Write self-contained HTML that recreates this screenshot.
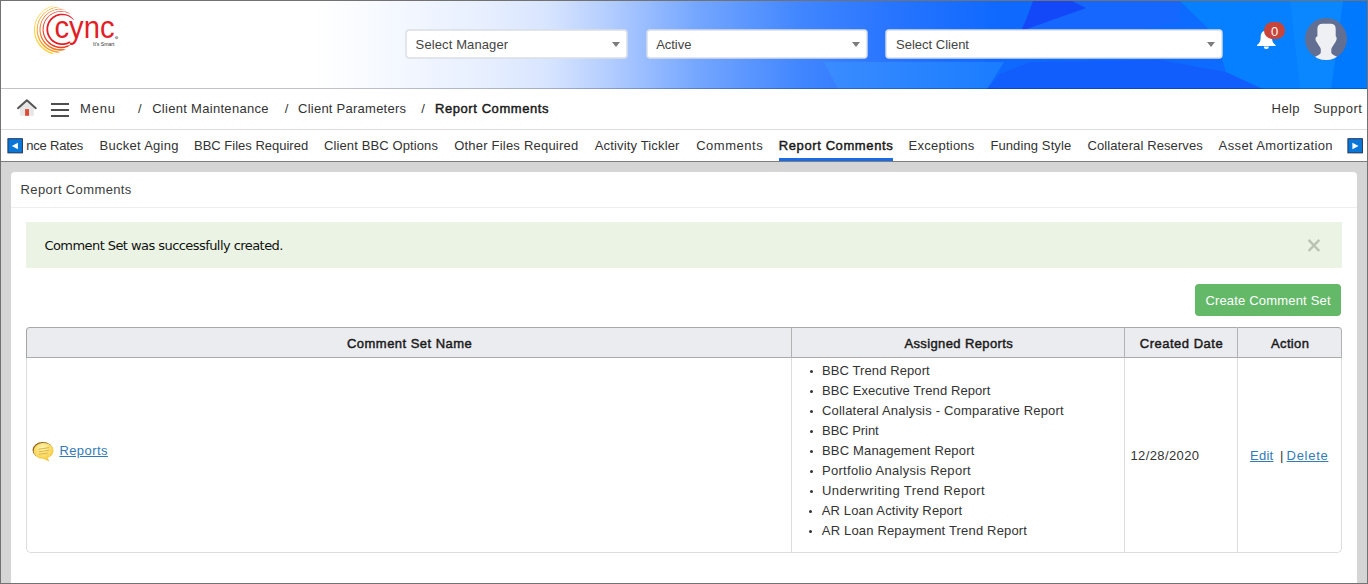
<!DOCTYPE html>
<html lang="en">
<head>
<meta charset="utf-8">
<title>Report Comments - Cync</title>
<style>
*{box-sizing:border-box;margin:0;padding:0}
html,body{width:1368px;height:584px;overflow:hidden;background:#fff}
body{font-family:"Liberation Sans",sans-serif;font-size:13px;color:#333;position:relative}
.frame{position:absolute;left:0;top:0;width:1368px;height:584px;border:1px solid #727272;z-index:50;pointer-events:none}
.abs{position:absolute;white-space:nowrap}
/* header */
header{position:absolute;left:1px;top:1px;width:1366px;height:88px;overflow:hidden;background:#fff}
header:after{content:"";position:absolute;left:0;top:87px;width:100%;height:1px;background:rgba(0,0,30,.24)}
header svg.bg{position:absolute;left:0;top:0}
.sel{position:absolute;top:29px;height:28px;background:#fff;border:1px solid #e1e5ec;border-radius:3px;box-shadow:0 0 0 0.700px #d9dee8;font-size:13px;color:#444;line-height:26px;padding-left:8px}
.sel i{position:absolute;right:6.200px;top:11px;width:0;height:0;border-left:4px solid transparent;border-right:4px solid transparent;border-top:5px solid #7c7c7c}
.uline{position:absolute;left:778px;top:28px;width:114px;height:3px;background:#1a6be6}
.badge{position:absolute;left:1263px;top:21px;width:21px;height:17px;border-radius:8.5px;background:#c9453a}
.burger{position:absolute;left:50px;top:14px;width:18px}
.burger i{display:block;height:2px;background:#4d4d4d;margin-bottom:4px}
.arr{position:absolute;top:7.700px}
/* breadcrumb */
.crumbs{position:absolute;left:1px;top:89px;width:1366px;height:41px;border-bottom:1px solid #dcdcdc;background:#fff}
.tabs{position:absolute;left:1px;top:130px;width:1366px;height:32px;border-bottom:1px solid #7d7d7d;background:#fff}
.t{position:absolute;white-space:nowrap;font-size:13px;color:#333;line-height:16px}
.b{font-weight:normal;color:#1a1a1a;-webkit-text-stroke:0.450px #1a1a1a}
.main{position:absolute;left:1px;top:162px;width:1366px;height:421px;background:#d5d5d5}
.panel{position:absolute;left:10px;top:10px;width:1346px;height:420px;background:#fff;border-radius:4px 4px 0 0}
.phead{position:absolute;left:0;top:0;width:100%;height:36px;border-bottom:1px solid #eeeeee}
.alert{position:absolute;left:15px;top:50px;width:1316px;height:46px;background:#ebf4e4;font-family:"DejaVu Sans","Liberation Sans",sans-serif;font-size:13px;color:#080808}
.btn{position:absolute;left:1184px;top:112px;width:146px;height:32px;background:#64b969;border-radius:4px;color:#fff;font-size:13px}
table{position:absolute;left:15px;top:155px;width:1316px;border-collapse:separate;border-spacing:0;font-size:13px}
th{height:31px;background:#ebecf0;border-top:1px solid #a9a9a9;border-bottom:1px solid #ababab;border-left:1px solid #b2b2b2;font-weight:normal;color:#222;text-align:center;position:relative}
td{height:195px;border-left:1px solid #dcdcdc;border-bottom:1px solid #dcdcdc;vertical-align:middle;position:relative}
th:last-child,td:last-child{border-right:1px solid #dcdcdc}
th:first-child{border-top-left-radius:4px;border-left-color:#a4a4a4}
th:last-child{border-top-right-radius:4px;border-right-color:#b2b2b2}
td:first-child{border-bottom-left-radius:5px}
td:last-child{border-bottom-right-radius:5px}
a,a.t{color:#337ab7;text-decoration:underline}
ul{list-style:none}
li:before{content:"";position:absolute;left:-12.500px;top:6.500px;width:3px;height:3px;border-radius:50%;background:#333}
</style>
</head>
<body>
<header>
<svg class="bg" width="1366" height="88" viewBox="1 1 1366 88">
<defs><linearGradient id="g" gradientUnits="userSpaceOnUse" x1="0" x2="1368" y1="0" y2="0">
<stop offset="0.23" stop-color="#ffffff"/><stop offset="0.29" stop-color="#f4f8ff"/><stop offset="0.355" stop-color="#e7efff"/><stop offset="0.40" stop-color="#d8e5ff"/><stop offset="0.445" stop-color="#b3cdff"/><stop offset="0.51" stop-color="#74a6ff"/><stop offset="0.585" stop-color="#4186ff"/><stop offset="0.65" stop-color="#2875ff"/><stop offset="0.73" stop-color="#0f69ff"/><stop offset="1" stop-color="#0b6cff"/></linearGradient><linearGradient id="g2" gradientUnits="userSpaceOnUse" x1="824" x2="1004" y1="0" y2="0"><stop offset="0" stop-color="#3b8cff"/><stop offset="1" stop-color="#197cff"/></linearGradient></defs>
<rect x="1" y="1" width="1366" height="88" fill="url(#g)"/>
<polygon points="824,62 1004,62 987,89 838,89" fill="url(#g2)"/>
<polygon points="1033,1 1180,1 1180,22 1120,32 1020,33" fill="#1667fd"/>
<polygon points="1033,1 1072,1 1086,8 1021,31 1026,20" fill="#1248f7"/>
<polygon points="987,89 1000,74 1030,62 1160,60 1226,72 1263,89" fill="#125efc"/>
<polygon points="1180,1 1367,1 1367,89 1263,89 1226,72 1214,34" fill="#0780ff"/>
<polygon points="1343,1 1367,1 1367,89 1331,89" fill="#0079ff"/><polygon points="1290,1 1343,1 1331,89 1300,89" fill="#0a86ff"/>
</svg>
<svg class="logo" width="130" height="60" viewBox="0 0 130 60" style="position:absolute;left:-1px;top:-1px">
<g><path d="M74.10 20.33L73.35 19.06L72.43 17.89L71.29 16.93L70.07 16.07L68.77 15.33L67.40 14.71L65.98 14.23L64.50 13.88L63.00 13.68L61.48 13.63L59.96 13.73L58.45 13.99L56.98 14.40L55.55 14.97L54.20 15.68L52.91 16.52L51.72 17.48L50.62 18.55L49.63 19.72L48.76 20.99L48.02 22.33L47.41 23.73L46.94 25.19L46.62 26.69L46.44 28.22L46.41 29.75L46.52 31.28L46.79 32.79L47.20 34.26L47.75 35.69L48.44 37.07L49.26 38.36L50.20 39.57L51.25 40.69L52.40 41.70L53.65 42.59L54.98 43.35L56.38 43.99L57.83 44.48L59.32 44.84L60.84 45.04L62.37 45.10L63.90 45.01L65.42 44.77L66.90 44.38L68.34 43.86L69.72 43.19L70.53 41.65L70.53 41.65L68.87 41.61L67.64 42.20L66.37 42.67L65.05 43.01L63.71 43.22L62.35 43.30L61.00 43.25L59.65 43.07L58.33 42.75L57.04 42.31L55.80 41.75L54.63 41.07L53.52 40.28L52.50 39.39L51.56 38.40L50.73 37.33L50.01 36.18L49.40 34.97L48.91 33.70L48.55 32.39L48.31 31.05L48.21 29.70L48.23 28.34L48.39 26.99L48.68 25.66L49.10 24.37L49.64 23.12L50.30 21.93L51.07 20.81L51.94 19.77L52.91 18.82L53.97 17.97L55.11 17.23L56.31 16.60L57.57 16.08L58.86 15.67L60.20 15.37L61.55 15.20L62.93 15.16L64.30 15.25L65.66 15.47L67.01 15.82L68.31 16.30L69.57 16.92L70.75 17.66L71.86 18.52L73.00 19.38L74.10 20.33z" fill="#e31e26"/><path d="M70.72 14.09L69.40 13.18L68.00 12.38L66.48 11.84L64.91 11.44L63.32 11.18L61.71 11.06L60.10 11.08L58.49 11.24L56.90 11.54L55.35 11.98L53.84 12.55L52.38 13.25L50.99 14.08L49.68 15.02L48.45 16.07L47.32 17.23L46.29 18.48L45.37 19.82L44.57 21.24L43.90 22.72L43.36 24.26L42.96 25.84L42.70 27.45L42.58 29.08L42.60 30.71L42.77 32.34L43.08 33.95L43.53 35.53L44.11 37.06L44.84 38.54L45.69 39.95L46.66 41.27L47.75 42.51L48.94 43.65L50.23 44.68L51.61 45.60L53.06 46.38L54.58 47.04L56.16 47.56L57.77 47.93L59.41 48.16L61.07 48.25L62.72 48.18L64.37 47.97L65.99 47.62L67.57 47.12L69.00 46.27L70.17 45.03L70.17 45.03L68.53 45.26L67.03 45.62L65.58 46.07L64.10 46.40L62.59 46.59L61.07 46.65L59.56 46.58L58.05 46.38L56.57 46.05L55.12 45.59L53.72 45.01L52.37 44.31L51.08 43.49L49.88 42.56L48.75 41.53L47.72 40.41L46.79 39.19L45.97 37.90L45.26 36.54L44.67 35.13L44.22 33.66L43.89 32.16L43.69 30.63L43.63 29.09L43.70 27.55L43.91 26.02L44.26 24.52L44.73 23.04L45.34 21.62L46.07 20.25L46.92 18.95L47.88 17.73L48.95 16.59L50.11 15.56L51.36 14.63L52.69 13.82L54.09 13.13L55.55 12.57L57.04 12.13L58.58 11.84L60.13 11.68L61.69 11.66L63.25 11.77L64.79 12.03L66.30 12.41L67.78 12.93L69.26 13.45L70.72 14.09z" fill="#e8432a"/><path d="M65.31 9.74L63.81 9.30L62.29 8.93L60.72 8.83L59.15 8.87L57.59 9.02L56.04 9.29L54.52 9.68L53.03 10.18L51.58 10.79L50.18 11.51L48.84 12.33L47.57 13.25L46.36 14.26L45.24 15.36L44.20 16.54L43.25 17.80L42.40 19.13L41.65 20.51L41.00 21.96L40.47 23.44L40.04 24.97L39.74 26.52L39.55 28.10L39.49 29.68L39.54 31.27L39.71 32.85L40.01 34.41L40.42 35.95L40.95 37.46L41.59 38.92L42.34 40.33L43.20 41.68L44.16 42.96L45.22 44.16L46.37 45.28L47.60 46.31L48.90 47.24L50.28 48.07L51.71 48.79L53.20 49.40L54.73 49.90L56.30 50.27L57.88 50.52L59.49 50.65L61.10 50.66L62.70 50.54L64.23 49.96L65.65 49.18L65.65 49.18L64.06 49.07L62.52 48.95L61.04 49.06L59.55 49.05L58.07 48.93L56.60 48.70L55.16 48.37L53.74 47.92L52.35 47.37L51.02 46.72L49.73 45.97L48.50 45.12L47.34 44.18L46.25 43.16L45.24 42.06L44.32 40.88L43.49 39.64L42.75 38.34L42.11 36.98L41.58 35.58L41.15 34.14L40.83 32.67L40.63 31.18L40.54 29.67L40.56 28.16L40.70 26.66L40.95 25.17L41.32 23.70L41.79 22.26L42.38 20.87L43.07 19.52L43.87 18.22L44.76 16.99L45.75 15.83L46.82 14.75L47.97 13.76L49.20 12.85L50.49 12.05L51.84 11.34L53.24 10.74L54.69 10.25L56.16 9.88L57.67 9.61L59.18 9.47L60.71 9.43L62.23 9.50L63.77 9.54L65.31 9.74z" fill="#f07a2b"/><path d="M59.68 7.13L58.19 7.08L56.68 7.07L55.19 7.28L53.72 7.62L52.28 8.07L50.87 8.60L49.51 9.23L48.18 9.95L46.90 10.75L45.68 11.63L44.52 12.59L43.42 13.62L42.39 14.73L41.44 15.90L40.56 17.12L39.76 18.41L39.05 19.74L38.43 21.12L37.90 22.54L37.46 23.99L37.12 25.47L36.88 26.97L36.73 28.48L36.69 30.00L36.74 31.52L36.90 33.04L37.16 34.54L37.51 36.03L37.97 37.48L38.52 38.91L39.17 40.30L39.90 41.64L40.73 42.93L41.64 44.17L42.63 45.34L43.70 46.44L44.84 47.47L46.05 48.42L47.32 49.29L48.64 50.07L50.02 50.76L51.44 51.36L52.89 51.86L54.38 52.26L55.89 52.56L57.42 52.75L58.97 52.43L60.46 52.06L60.46 52.06L58.99 51.69L57.57 51.17L56.15 50.98L54.74 50.70L53.36 50.33L52.00 49.87L50.68 49.32L49.39 48.68L48.15 47.97L46.95 47.17L45.81 46.30L44.73 45.36L43.71 44.34L42.76 43.26L41.88 42.12L41.07 40.93L40.35 39.68L39.71 38.39L39.15 37.06L38.68 35.69L38.31 34.29L38.02 32.87L37.83 31.43L37.74 29.98L37.74 28.53L37.84 27.08L38.03 25.64L38.32 24.21L38.71 22.80L39.19 21.42L39.76 20.08L40.42 18.78L41.16 17.52L41.99 16.31L42.90 15.16L43.88 14.08L44.94 13.06L46.06 12.12L47.24 11.25L48.48 10.47L49.77 9.77L51.11 9.15L52.48 8.63L53.88 8.20L55.31 7.87L56.75 7.58L58.20 7.28L59.68 7.13z" fill="#f7a531"/><path d="M54.75 5.57L53.33 5.78L51.91 6.02L50.52 6.40L49.18 6.93L47.87 7.54L46.60 8.22L45.37 8.98L44.19 9.81L43.06 10.70L41.98 11.65L40.95 12.67L39.98 13.74L39.08 14.87L38.24 16.05L37.47 17.27L36.77 18.54L36.14 19.84L35.59 21.18L35.12 22.55L34.73 23.95L34.42 25.37L34.18 26.80L34.04 28.25L33.97 29.70L34.00 31.16L34.10 32.61L34.29 34.06L34.57 35.49L34.93 36.91L35.37 38.30L35.89 39.67L36.49 41.00L37.17 42.30L37.93 43.56L38.76 44.77L39.66 45.93L40.63 47.03L41.66 48.08L42.75 49.07L43.90 49.98L45.10 50.83L46.35 51.61L47.65 52.31L48.98 52.93L50.35 53.47L51.76 53.88L53.28 53.83L54.75 53.83L54.75 53.83L53.42 53.25L52.19 52.46L50.89 51.97L49.61 51.46L48.36 50.88L47.15 50.23L45.97 49.51L44.84 48.72L43.75 47.87L42.72 46.96L41.73 45.99L40.80 44.97L39.94 43.89L39.13 42.77L38.39 41.60L37.72 40.39L37.12 39.14L36.59 37.86L36.13 36.55L35.75 35.21L35.45 33.85L35.23 32.48L35.09 31.09L35.03 29.70L35.04 28.30L35.15 26.91L35.33 25.53L35.59 24.15L35.94 22.80L36.36 21.46L36.86 20.15L37.44 18.87L38.09 17.63L38.82 16.43L39.62 15.27L40.48 14.16L41.41 13.10L42.40 12.10L43.45 11.16L44.55 10.29L45.70 9.48L46.90 8.74L48.14 8.07L49.41 7.48L50.72 6.96L52.04 6.44L53.37 5.94L54.75 5.57z" fill="#fdd447"/></g>
<text x="54.5" y="37.5" font-family="Liberation Sans, sans-serif" font-size="32" fill="#e21e26" textLength="60" lengthAdjust="spacingAndGlyphs">cync</text>
<circle cx="116.600" cy="37.600" r="1.700" fill="#8a8a8a"/><text x="115.200" y="39.100" font-family="Liberation Sans, sans-serif" font-size="3.800" fill="#fff">®</text>
<text x="93" y="45.6" font-family="Liberation Sans, sans-serif" font-size="4.6" fill="#333" textLength="21.5" lengthAdjust="spacingAndGlyphs">It's Smart</text>
</svg>
<div class="sel" style="left:405px;width:221px"><span id="s1" class="t" style="left:8.6px;top:6px;color:#444;letter-spacing:0.115px">Select Manager</span><i></i></div>
<div class="sel" style="left:646px;width:220.200px"><span id="s2" class="t" style="left:8.2px;top:6px;color:#444;letter-spacing:-0.04px">Active</span><i></i></div>
<div class="sel" style="left:885px;width:336.200px"><span id="s3" class="t" style="left:9.0px;top:6px;color:#444;letter-spacing:0.0px">Select Client</span><i></i></div>
<svg width="24" height="22" viewBox="1255 29 24 22" style="position:absolute;left:1254px;top:28px">
<path d="M1266.3 30.6c-4 0-5.6 3-5.6 6.6 0 4.2-1.3 6.2-3.7 7.7v1h18.6v-1c-2.4-1.500-3.700-3.500-3.700-7.700 0-3.600-1.600-6.600-5.600-6.600z" fill="#fff"/>
<path d="M1263.800 46.600a2.500 2.500 0 0 0 5 0z" fill="#fff"/>
</svg>
<span class="badge"><span id="b0" class="t" style="left:7.100px;top:2px;color:#fff;font-size:13px">0</span></span>
<svg width="44" height="44" viewBox="1304 17 44 44" style="position:absolute;left:1303px;top:16px">
<defs><clipPath id="av"><circle cx="1326" cy="39" r="21"/></clipPath></defs>
<circle cx="1326" cy="39" r="21" fill="#626f92"/>
<g clip-path="url(#av)" fill="#eef0f3">
<path d="M1317.400 28.800C1317.400 25.600 1319.300 23.800 1322.300 23.800L1330.800 23.800C1333.800 23.800 1335.700 25.600 1335.700 28.800L1335.700 36.300C1336.900 37 1337 39.600 1335.900 41.200L1331.800 47.800C1331.400 48.500 1331.300 49 1331.300 49.800L1331.300 52.600C1331.300 54.200 1333.500 55.300 1336.500 56.500L1341 58.500V62H1311V58.500L1315.600 56.500C1318.600 55.300 1320.800 54.200 1320.800 52.600L1320.800 49.800C1320.800 49 1320.700 48.500 1320.300 47.800L1316.200 41.200C1315.100 39.600 1315.200 37 1317.400 36.300z"/>
</g></svg>
</header>
<nav class="crumbs">
<svg width="22" height="19" viewBox="16 98 22 19" style="position:absolute;left:15px;top:9px">
<path d="M20.100 107L26.900 101 33.800 107V115.800H20.100z" fill="#e6e6e6"/>
<rect x="25.100" y="109.100" width="3.900" height="6.700" fill="#dc4b37"/>
<path d="M18 108.200L26.900 100.200 35.800 108.200" fill="none" stroke="#555" stroke-width="2" stroke-linecap="round" stroke-linejoin="round"/>
</svg>
<div class="burger"><i></i><i></i><i></i></div>
<span id="c1" class="t" style="left:79.0px;top:12px;letter-spacing:0.804px">Menu</span>
<span id="c2" class="t" style="left:137.0px;top:12px;letter-spacing:0px">/</span>
<span id="c3" class="t" style="left:151.2px;top:12px;letter-spacing:0.294px">Client Maintenance</span>
<span id="c4" class="t" style="left:283.8px;top:12px;letter-spacing:0px">/</span>
<span id="c5" class="t" style="left:297.0px;top:12px;letter-spacing:0.25px">Client Parameters</span>
<span id="c6" class="t" style="left:420.2px;top:12px;letter-spacing:0px">/</span>
<span id="c7" class="t b" style="left:434.0px;top:12px;letter-spacing:0.571px">Report Comments</span>
<span id="c8" class="t" style="left:1270.6px;top:12px;letter-spacing:0.396px">Help</span>
<span id="c9" class="t" style="left:1312.4px;top:12px;letter-spacing:0.503px">Support</span>
</nav>
<nav class="tabs">
<svg class="arr" width="17" height="17" viewBox="0 0 17 17" style="left:5.900px"><rect x="0.900" y="0.700" width="14.500" height="14.200" fill="#0a76d8" stroke="#1b2947" stroke-width="0.900"/><path d="M4.800 8L10.900 4.700V11.300z" fill="#fff"/></svg>
<svg class="arr" width="17" height="17" viewBox="0 0 17 17" style="left:1346.400px"><rect x="0.900" y="0.700" width="14.500" height="14.200" fill="#0a76d8" stroke="#1b2947" stroke-width="0.900"/><path d="M11.500 8L5.400 4.700V11.300z" fill="#fff"/></svg>
<span id="t1" class="t" style="left:25.2px;top:8px;letter-spacing:-0.175px">nce Rates</span>
<span id="t2" class="t" style="left:98.6px;top:8px;letter-spacing:0.272px">Bucket Aging</span>
<span id="t3" class="t" style="left:193.0px;top:8px;letter-spacing:-0.001px">BBC Files Required</span>
<span id="t4" class="t" style="left:323.0px;top:8px;letter-spacing:0.116px">Client BBC Options</span>
<span id="t5" class="t" style="left:453.2px;top:8px;letter-spacing:0.211px">Other Files Required</span>
<span id="t6" class="t" style="left:593.8px;top:8px;letter-spacing:0.15px">Activity Tickler</span>
<span id="t7" class="t" style="left:695.2px;top:8px;letter-spacing:0.521px">Comments</span>
<span id="t8" class="t b" style="left:777.8px;top:8px;letter-spacing:0.6px">Report Comments</span>
<span id="t9" class="t" style="left:907.6px;top:8px;letter-spacing:0.238px">Exceptions</span>
<span id="t10" class="t" style="left:989.4px;top:8px;letter-spacing:0.11px">Funding Style</span>
<span id="t11" class="t" style="left:1086.4px;top:8px;letter-spacing:0.111px">Collateral Reserves</span>
<span id="t12" class="t" style="left:1217.6px;top:8px;letter-spacing:0.373px">Asset Amortization</span>
<div class="uline"></div>
</nav>
<section class="main">
<div class="panel">
<div class="phead"><span id="p1" class="t" style="left:9.6px;top:10px;color:#3c3c3c;letter-spacing:0.375px">Report Comments</span></div>
<div class="alert"><span id="p2" class="t" style="left:18.4px;top:16px;font-size:inherit;color:#111;letter-spacing:-0.56px">Comment Set was successfully created.</span><svg width="16" height="16" viewBox="1306 238 16 16" style="position:absolute;left:1280px;top:16px"><path d="M1308.600 239.800L1319.300 251M1319.300 239.800L1308.600 251" stroke="#b9c2b5" stroke-width="2.400" fill="none"/></svg></div>
<div class="btn"><span id="p3" class="t" style="left:10.4px;top:9px;color:#fff;letter-spacing:0.179px">Create Comment Set</span></div>
<table>
<colgroup><col style="width:765px"><col style="width:333px"><col style="width:113px"><col style="width:105px"></colgroup>
<thead><tr>
<th><span id="h1" class="t b" style="left:320.0px;top:8px;letter-spacing:0.467px">Comment Set Name</span></th>
<th><span id="h2" class="t b" style="left:112.4px;top:8px;letter-spacing:0.384px">Assigned Reports</span></th>
<th><span id="h3" class="t b" style="left:14.8px;top:8px;letter-spacing:0.506px">Created Date</span></th>
<th><span id="h4" class="t b" style="left:33.0px;top:8px;letter-spacing:0.36px">Action</span></th>
</tr></thead>
<tbody><tr>
<td><svg width="26" height="24" viewBox="30 440 26 24" style="position:absolute;left:3.300px;top:82.300px">
<defs><radialGradient id="cg" cx="0.45" cy="0.3" r="0.85"><stop offset="0" stop-color="#fff6b8"/><stop offset="0.55" stop-color="#f9d658"/><stop offset="1" stop-color="#e8b030"/></radialGradient></defs>
<ellipse cx="42.800" cy="450.100" rx="10.300" ry="8" fill="#8f6218"/>
<path d="M33.600 451.100a10 7.900 0 1 1 14.200 6.900l1.500 3.600-5.400-2.600a10 7.900 0 0 1-10.300-7.900z" fill="url(#cg)"/>
<path d="M38.600 449.200L49 447.700M38.700 451.800L49 450.300M39 454.300L47.800 453" stroke="#dcae3a" stroke-width="0.900" fill="none"/>
</svg><a id="k1" href="#" class="t" style="left:32.4px;top:85px;letter-spacing:0.426px">Reports</a></td>
<td><ul>
<li id="l1" class="t" style="left:30.0px;top:5px;letter-spacing:0.099px">BBC Trend Report</li>
<li id="l2" class="t" style="left:30.0px;top:25px;letter-spacing:0.088px">BBC Executive Trend Report</li>
<li id="l3" class="t" style="left:30.0px;top:45px;letter-spacing:0.193px">Collateral Analysis - Comparative Report</li>
<li id="l4" class="t" style="left:30.0px;top:65px;letter-spacing:-0.043px">BBC Print</li>
<li id="l5" class="t" style="left:30.0px;top:85px;letter-spacing:0.17px">BBC Management Report</li>
<li id="l6" class="t" style="left:30.0px;top:105px;letter-spacing:0.292px">Portfolio Analysis Report</li>
<li id="l7" class="t" style="left:30.0px;top:125px;letter-spacing:0.425px">Underwriting Trend Report</li>
<li id="l8" class="t" style="left:29.8px;top:145px;letter-spacing:0.135px">AR Loan Activity Report</li>
<li id="l9" class="t" style="left:29.8px;top:165px;letter-spacing:0.172px">AR Loan Repayment Trend Report</li>
</ul></td>
<td><span id="d1" class="t" style="left:5.4px;top:90px;letter-spacing:0.396px">12/28/2020</span></td>
<td><a id="k2" href="#" class="t" style="left:12.0px;top:90px;letter-spacing:0.27px">Edit</a><span id="k3" class="t" style="left:42px;top:90px">|</span><a id="k4" href="#" class="t" style="left:48.6px;top:90px;letter-spacing:0.7px">Delete</a></td>
</tr></tbody>
</table>
</div>
</section>
<div class="frame"></div>
</body>
</html>
